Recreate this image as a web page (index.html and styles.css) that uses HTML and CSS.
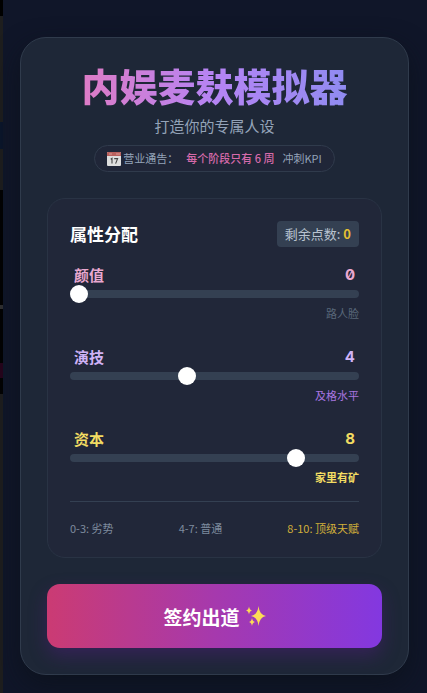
FILE: index.html
```html
<!DOCTYPE html>
<html lang="zh-Hans">
<head>
    <meta charset="UTF-8">
    <meta name="viewport" content="width=device-width, initial-scale=1.0">
    <title>内娱麦麸模拟器</title>
    <link rel="stylesheet" href="styles.css">
</head>
<body>
    <div class="page-edge"></div>

    <main class="card">
        <header class="intro">
            <h1>内娱麦麸模拟器</h1>
            <p class="subtitle">打造你的专属人设</p>
            <div class="notice">
                <span class="notice-label">
                    <svg class="calendar-icon" viewBox="0 0 14 14" aria-hidden="true">
                        <rect width="14" height="14" rx="1" fill="#dedede"/>
                        <path d="M0 1a1 1 0 0 1 1-1h12a1 1 0 0 1 1 1v3H0z" fill="#b9605d"/>
                        <path d="M2 2h3M10 1v2M12 1v2" stroke="#d99a96" stroke-width="1"/>
                        <path d="M3.7 7.3 5 6.4v5.2M7.2 6.6h3.4L8.6 11.6" fill="none" stroke="#444" stroke-width="1.1"/>
                    </svg>
                    营业通告：
                </span>
                <span class="notice-main">每个阶段只有 6 周</span>
                <span>冲刺KPI</span>
            </div>
        </header>

        <!-- 属性分配 -->
        <section class="panel">
            <div class="panel-head">
                <h2>属性分配</h2>
                <div class="points">剩余点数: <strong id="points">0</strong></div>
            </div>

            <div class="stat looks">
                <div class="stat-head">
                    <label for="looks">颜值</label>
                    <output class="value" for="looks">0</output>
                </div>
                <input type="range" id="looks" min="0" max="10" value="0">
                <p class="level">路人脸</p>
            </div>

            <div class="stat acting">
                <div class="stat-head">
                    <label for="acting">演技</label>
                    <output class="value" for="acting">4</output>
                </div>
                <input type="range" id="acting" min="0" max="10" value="4">
                <p class="level">及格水平</p>
            </div>

            <div class="stat capital">
                <div class="stat-head">
                    <label for="capital">资本</label>
                    <output class="value" for="capital">8</output>
                </div>
                <input type="range" id="capital" min="0" max="10" value="8">
                <p class="level">家里有矿</p>
            </div>

            <div class="legend">
                <span>0-3: 劣势</span>
                <span>4-7: 普通</span>
                <span class="legend-top">8-10: 顶级天赋</span>
            </div>
        </section>

        <button type="button" class="start-btn">
            签约出道
            <svg class="sparkle-icon" viewBox="0 0 20 20" aria-hidden="true">
                <path d="M12.500 0Q13.300 8.700 20 10Q13.300 11.300 12.500 20Q11.700 11.300 5 10Q11.700 8.700 12.500 0z"/>
                <path d="M3 .5Q3.500 4 6 4.500Q3.500 5 3 8.500Q2.500 5 0 4.500Q2.500 4 3 .5z"/>
                <path d="M6 12Q6.500 15.500 9 16Q6.500 16.500 6 20Q5.500 16.500 3 16Q5.500 15.500 6 12z"/>
            </svg>
        </button>
    </main>
</body>
</html>
```

FILE: styles.css
```css
* {
    box-sizing: border-box;
}

body {
    margin: 0;
    min-height: 100vh;
    display: flex;
    background-color: #101629;
    color: #94a3b8;
    font-family: "Noto Sans CJK SC", sans-serif;
}

h1, h2, p {
    margin: 0;
}

/* 左侧露出的底层页面 */
.page-edge {
    flex: 0 0 3px;
    background: linear-gradient(#000 0 16px, #1e1e1e 16px 122px, #0b162a 122px 149px, #1e1e1e 149px 190px, #030303 190px 305px, #303030 305px 309px, #030303 309px 363px, #26051c 363px 378px, #030303 378px 394px, #1e1e1e 394px);
}

.card {
    flex: 1;
    margin: 37px 18px 18px 17px;
    padding: 26px;
    border: 1px solid #303b4c;
    border-radius: 26px;
    background-color: #1e2737;
    box-shadow: 0 10px 26px rgba(11, 17, 26, 0.7);
}

.intro {
    display: flex;
    flex-direction: column;
    align-items: center;
}

h1 {
    width: 100%;
    background: linear-gradient(to right, #e879b9, #b584f4 50%, #868df0);
    background-clip: text;
    -webkit-background-clip: text;
    color: transparent;
    font-size: 38px;
    font-weight: 900;
    line-height: 42px;
    text-align: center;
}

.subtitle {
    margin-top: 9px;
    font-size: 15px;
    line-height: 22px;
}

.notice {
    display: flex;
    align-items: center;
    gap: 8px;
    margin-top: 8px;
    padding: 4px 12px;
    border: 1px solid #303b4c;
    border-radius: 14px;
    background-color: #202638;
    font-size: 11px;
    line-height: 17px;
}

.notice-label {
    display: flex;
    align-items: center;
    gap: 2px;
}

.calendar-icon {
    width: 14px;
    height: 14px;
}

.notice-main {
    color: #d66aaa;
    font-weight: 500;
}

.panel {
    margin-top: 26px;
    padding: 22px 22px 20px;
    border: 1px solid #293344;
    border-radius: 18px;
    background-color: #212739;
}

.panel-head {
    display: flex;
    justify-content: space-between;
    align-items: center;
    margin-bottom: 17px;
}

h2 {
    color: #fff;
    font-size: 17px;
    font-weight: 700;
    line-height: 26px;
}

.points {
    padding: 3px 8px;
    border-radius: 4px;
    background-color: #344052;
    color: #b9c3d0;
    font-size: 13px;
    line-height: 20px;
}

.points strong {
    color: #e3bf32;
}

.stat {
    margin-bottom: 22px;
}

.stat-head {
    display: flex;
    justify-content: space-between;
    padding: 0 4px;
    font-size: 15px;
    font-weight: 700;
    line-height: 22px;
}

.value {
    font-family: "Inter", sans-serif;
    font-feature-settings: "zero";
}

.stat input {
    appearance: none;
    -webkit-appearance: none;
    display: block;
    width: 100%;
    height: 8px;
    margin: 4px 0 5px;
    border-radius: 4px;
    background-color: #344052;
    cursor: pointer;
}

.stat input::-webkit-slider-thumb {
    -webkit-appearance: none;
    width: 18px;
    height: 18px;
    border-radius: 50%;
    background-color: #fff;
}

.level {
    font-size: 11px;
    line-height: 21px;
    text-align: right;
}

.looks {
    color: #eaa8d0;
}

.looks .level {
    color: #59677a;
}

.acting {
    color: #cfb2f6;
}

.acting .level {
    color: #a775e0;
}

.capital {
    margin-bottom: 13px;
    color: #f2dc62;
}

.capital .level {
    font-weight: 700;
}

.legend {
    display: flex;
    justify-content: space-between;
    padding-top: 17px;
    border-top: 1px solid #344052;
    color: #7e8b9e;
    font-size: 11px;
    line-height: 18px;
}

.legend-top {
    color: #d2b03a;
}

.start-btn {
    display: flex;
    justify-content: center;
    align-items: center;
    gap: 6px;
    width: 100%;
    height: 64px;
    margin-top: 26px;
    border: none;
    border-radius: 13px;
    background: linear-gradient(to right, #cb3b73, #a639ad 50%, #8338e0);
    box-shadow: 0 8px 18px rgba(88, 28, 135, 0.4);
    color: #fff;
    font-family: inherit;
    font-size: 19px;
    font-weight: 700;
    cursor: pointer;
}

.sparkle-icon {
    width: 20px;
    height: 20px;
    fill: #fcdc55;
}
```
